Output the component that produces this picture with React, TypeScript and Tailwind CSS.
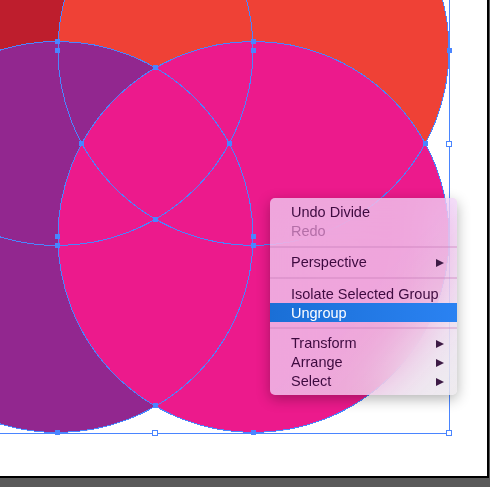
const STROKE = "#4a85ff";

const CIRCLES = [
  { cx: 57.5, cy: 50, fill: "#be1e2d" },
  { cx: 253.5, cy: 50, fill: "#ef4136" },
  { cx: 57.5, cy: 237, fill: "#92278f" },
  { cx: 253.5, cy: 237, fill: "#ec1a8c" },
];

const ANCHORS = [
  [57, 41], [57, 50], [253, 41], [253, 50], [449, 50], [155, 67],
  [81, 143], [229, 143], [425, 143], [155, 219],
  [57, 236], [57, 245], [253, 236], [253, 245], [155, 405], [57, 432], [253, 432],
];

const HANDLES = [[449, 144], [155, 433], [449, 433]];

function Artwork() {
  return (
    <svg width="487" height="476" viewBox="0 0 487 476" className="block">
      {CIRCLES.map((c) => (
        <circle key={c.fill} cx={c.cx} cy={c.cy} r={195.5} fill={c.fill} />
      ))}
      {CIRCLES.map((c) => (
        <circle
          key={c.fill}
          cx={c.cx}
          cy={c.cy}
          r={195.5}
          fill="none"
          stroke={STROKE}
          strokeWidth={1}
          shapeRendering="crispEdges"
        />
      ))}
      <path d="M449.5 0V433.5H0" fill="none" stroke={STROKE} strokeWidth={1} shapeRendering="crispEdges" />
      {ANCHORS.map(([x, y]) => (
        <rect key={`${x}-${y}`} x={x - 2} y={y - 2} width={5} height={5} fill={STROKE} shapeRendering="crispEdges" />
      ))}
      {HANDLES.map(([x, y]) => (
        <rect
          key={`${x}-${y}`}
          x={x - 2.5}
          y={y - 2.5}
          width={5}
          height={5}
          fill="#fff"
          stroke={STROKE}
          strokeWidth={1}
          shapeRendering="crispEdges"
        />
      ))}
    </svg>
  );
}

function MenuRow({ label, disabled, active, submenu }: { label: string; disabled?: boolean; active?: boolean; submenu?: boolean }) {
  return (
    <div
      className={`flex h-[19px] items-center justify-between pl-[21px] pr-[13px] pt-[2px] ${
        active
          ? "bg-gradient-to-r from-[#1a6fd6] to-[#2a82f2] text-white"
          : disabled
            ? "text-[#b46fa8]"
            : "text-[#3d0a3f]"
      }`}
    >
      <span>{label}</span>
      {submenu && <span className="h-0 w-0 border-y-[4.5px] border-l-[8px] border-y-transparent border-l-[#3d1a45]" />}
    </div>
  );
}

function Separator({ className }: { className: string }) {
  return <div className={`h-[2px] bg-[#c77bb8]/35 ${className}`} />;
}

export default function App() {
  return (
    <div className="h-[487px] w-[490px] overflow-hidden bg-[#5a5a5a]">
      <div className="relative box-content h-[476px] w-[487px] border-b-2 border-r-2 border-black bg-white">
        <Artwork />
        <div className="absolute left-[270px] top-[198px] h-[197px] w-[187px] overflow-hidden rounded-[5px] bg-gradient-to-br from-[#f0e2ff]/70 via-[#f0e2ff]/70 to-[#e8e4e8]/75 pt-[4px] font-['Liberation_Sans',Arial,sans-serif] text-[14.5px] shadow-[0_4px_14px_rgba(0,0,0,0.3)] backdrop-blur-xl">
          <MenuRow label="Undo Divide" />
          <MenuRow label="Redo" disabled />
          <Separator className="mb-[4px] mt-[6px]" />
          <MenuRow label="Perspective" submenu />
          <Separator className="mb-[5px] mt-[6px]" />
          <MenuRow label="Isolate Selected Group" />
          <MenuRow label="Ungroup" active />
          <Separator className="mb-[4px] mt-[5px]" />
          <MenuRow label="Transform" submenu />
          <MenuRow label="Arrange" submenu />
          <MenuRow label="Select" submenu />
        </div>
      </div>
    </div>
  );
}
